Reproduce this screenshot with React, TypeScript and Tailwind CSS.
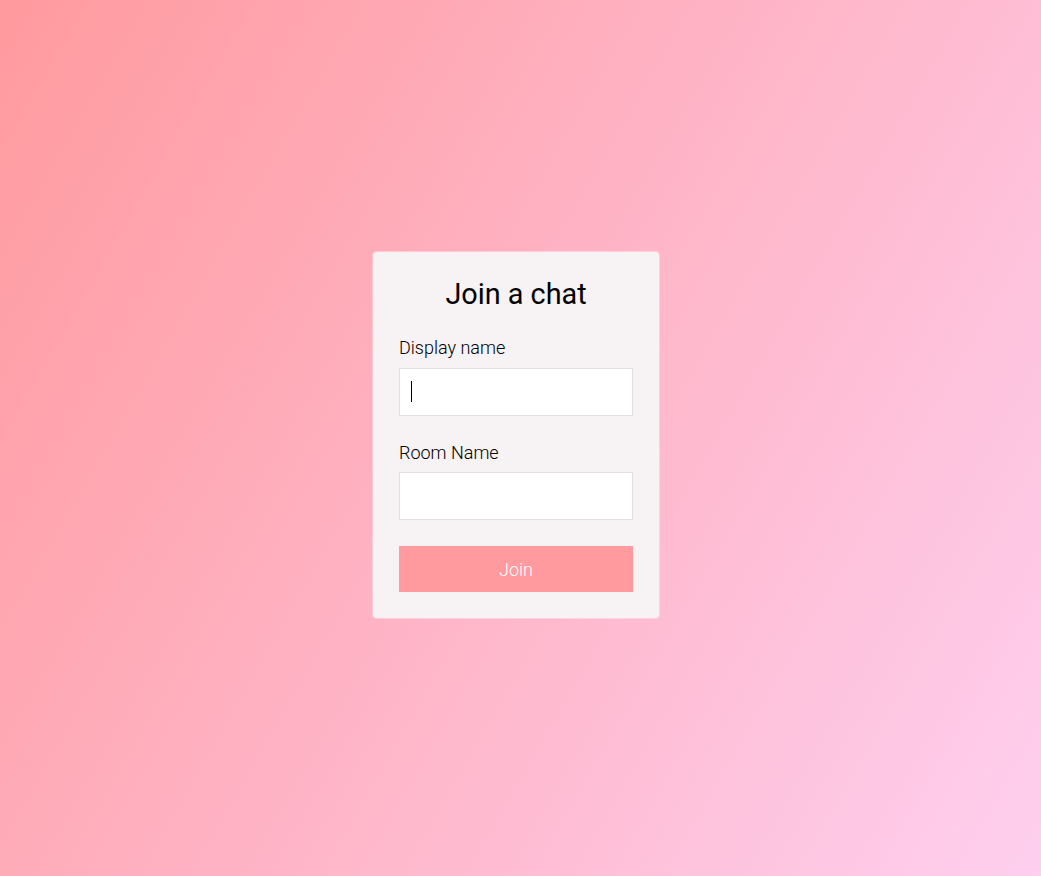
export default function App() {
  return (
    <main className="w-full min-h-screen flex items-center justify-center pr-[9px] pb-[6px] bg-[linear-gradient(120deg,#ff9a9e_0%,#fecfef_100%)] font-['Roboto',sans-serif] font-light">
      <form className="w-[286px] flex flex-col p-[26px] bg-[#f7f2f3] rounded-[4px] shadow-[0_0_0_1px_rgba(255,255,255,0.35)]">
        <h1 className="text-[28.8px] leading-[33px] font-normal text-black text-center mb-[26px]">Join a chat</h1>

        <label className="text-[18px] leading-[21px] text-black mb-[10px]">Display name</label>
        <div className="relative mb-[26px]">
          <input
            autoFocus
            type="text"
            className="h-[48px] w-full bg-white border border-[#e2dfe0] px-3 text-[18px] outline-none"
          />
          {/* caret of the focused field */}
          <span className="absolute left-[12px] top-[13px] w-px h-[21px] bg-black pointer-events-none" />
        </div>

        <label className="text-[18px] leading-[21px] text-black mb-[9px]">Room Name</label>
        <input
          type="text"
          className="h-[48px] w-full bg-white border border-[#e2dfe0] px-3 text-[18px] outline-none"
        />

        <button
          type="button"
          className="mt-[26px] h-[46px] w-full bg-[#ff9a9e] text-white text-[18px] font-light"
        >
          Join
        </button>
      </form>
    </main>
  )
}
